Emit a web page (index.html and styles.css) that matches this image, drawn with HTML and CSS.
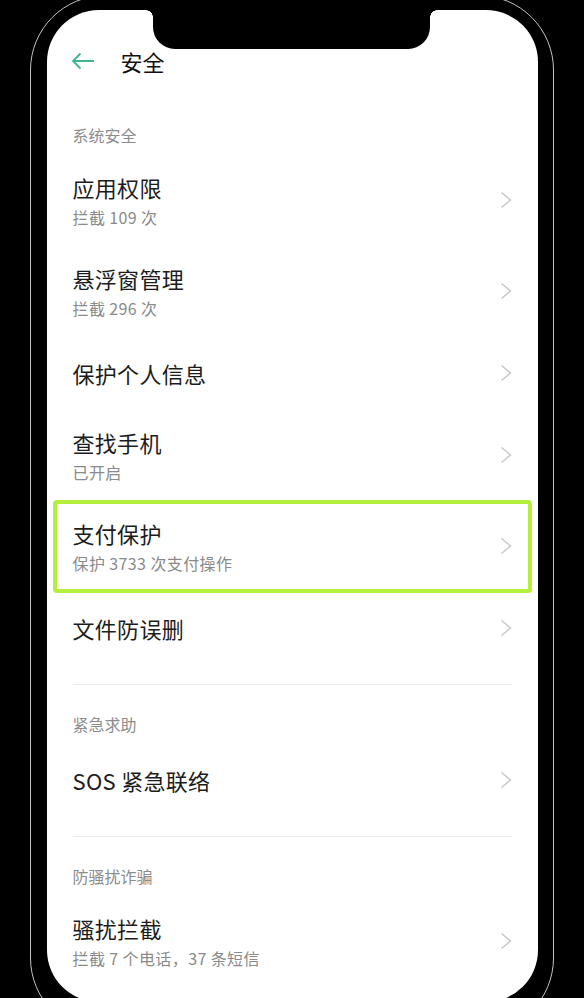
FILE: index.html
```html
<!doctype html>
<html lang="zh-CN">
  <head>
    <meta charset="UTF-8" />
    <meta name="viewport" content="width=device-width, initial-scale=1.0" />
    <title>安全</title>
    <link rel="stylesheet" href="styles.css">
  </head>
  <body>
    <div class="phone">
      <div class="screen">
        <div class="notch"></div>
        <header class="topbar">
          <svg class="back" viewBox="0 0 24 18" width="24" height="18">
            <path d="M23 9H2M9.5 1.5L2 9l7.5 7.5" />
          </svg>
          <h1>安全</h1>
        </header>
        <main class="content">
          <div class="group-label">系统安全</div>
          <div class="row tall">
            <div class="row-text">
              <div class="row-title">应用权限</div>
              <div class="row-sub">拦截 109 次</div>
            </div>
            <svg class="chevron" viewBox="0 0 12 18" width="12" height="18"><path d="M1.5 1.5L10.5 9l-9 7.5" /></svg>
          </div>
          <div class="row tall">
            <div class="row-text">
              <div class="row-title">悬浮窗管理</div>
              <div class="row-sub">拦截 296 次</div>
            </div>
            <svg class="chevron" viewBox="0 0 12 18" width="12" height="18"><path d="M1.5 1.5L10.5 9l-9 7.5" /></svg>
          </div>
          <div class="row">
            <div class="row-text">
              <div class="row-title">保护个人信息</div>
            </div>
            <svg class="chevron" viewBox="0 0 12 18" width="12" height="18"><path d="M1.5 1.5L10.5 9l-9 7.5" /></svg>
          </div>
          <div class="row tall">
            <div class="row-text">
              <div class="row-title">查找手机</div>
              <div class="row-sub">已开启</div>
            </div>
            <svg class="chevron" viewBox="0 0 12 18" width="12" height="18"><path d="M1.5 1.5L10.5 9l-9 7.5" /></svg>
          </div>
          <div class="row tall highlight">
            <div class="row-text">
              <div class="row-title">支付保护</div>
              <div class="row-sub">保护 3733 次支付操作</div>
            </div>
            <svg class="chevron" viewBox="0 0 12 18" width="12" height="18"><path d="M1.5 1.5L10.5 9l-9 7.5" /></svg>
          </div>
          <div class="row">
            <div class="row-text">
              <div class="row-title">文件防误删</div>
            </div>
            <svg class="chevron" viewBox="0 0 12 18" width="12" height="18"><path d="M1.5 1.5L10.5 9l-9 7.5" /></svg>
          </div>

          <div class="divider"></div>
          <div class="group-label">紧急求助</div>
          <div class="row">
            <div class="row-text">
              <div class="row-title">SOS 紧急联络</div>
            </div>
            <svg class="chevron" viewBox="0 0 12 18" width="12" height="18"><path d="M1.5 1.5L10.5 9l-9 7.5" /></svg>
          </div>

          <div class="divider"></div>
          <div class="group-label">防骚扰诈骗</div>
          <div class="row tall">
            <div class="row-text">
              <div class="row-title">骚扰拦截</div>
              <div class="row-sub">拦截 7 个电话，37 条短信</div>
            </div>
            <svg class="chevron" viewBox="0 0 12 18" width="12" height="18"><path d="M1.5 1.5L10.5 9l-9 7.5" /></svg>
          </div>
        </main>
      </div>
    </div>
  </body>
</html>
```

FILE: styles.css
```css
html,
body {
  height: 100%;
  margin: 0;
  padding: 0;
  overflow: hidden;
}
body {
  background: #000;
  font-family: "Noto Sans CJK SC", "Noto Sans", sans-serif;
  color: #1c1c1c;
}
.phone {
  box-sizing: border-box;
  width: 524px;
  margin: -5px auto 0;
  padding: 13.5px 15.5px 30px;
  border: 1.5px solid #c4c4c4;
  border-radius: 75px;
  background: #000;
}
.screen {
  position: relative;
  height: 992px;
  background: #fff;
  border-radius: 52px;
  overflow: hidden;
}
.notch {
  position: absolute;
  top: 0;
  left: 106px;
  width: 277px;
  height: 39px;
  background: #000;
  border-radius: 0 0 22px 22px;
}
.notch::before,
.notch::after {
  content: "";
  position: absolute;
  top: 0;
  width: 7px;
  height: 7px;
}
.notch::before {
  left: -7px;
  background: radial-gradient(circle at 0 100%, transparent 6.5px, #000 7px);
}
.notch::after {
  right: -7px;
  background: radial-gradient(circle at 100% 100%, transparent 6.5px, #000 7px);
}
.topbar {
  display: flex;
  align-items: center;
  gap: 26px;
  height: 56px;
  margin-top: 23px;
  padding-left: 24px;
}
.back {
  fill: none;
  stroke: #3fb58f;
  stroke-width: 1.8;
}
.topbar h1 {
  margin: 0;
  font-size: 22px;
  font-weight: 400;
  color: #111;
}
.content {
  padding: 34px 26px 0;
}
.group-label {
  font-size: 16px;
  line-height: 24px;
  color: #8c8c8c;
  margin-bottom: 8px;
}
.row {
  box-sizing: border-box;
  display: flex;
  align-items: center;
  justify-content: space-between;
  height: 73px;
}
.row.tall {
  height: 91px;
}
.row-title {
  font-size: 22px;
  line-height: 32px;
  letter-spacing: 0.3px;
  color: #1c1c1c;
}
.row-sub {
  margin-top: 2px;
  font-size: 16px;
  line-height: 24px;
  letter-spacing: 0.4px;
  color: #8a8a8a;
}
.chevron {
  flex: none;
  fill: none;
  stroke: #cacaca;
  stroke-width: 1.6;
}
.row.highlight {
  height: 93px;
  margin: -1px -20px;
  padding: 0 16px;
  border: 4px solid #b3ef3c;
  border-radius: 4px;
}
.divider {
  height: 1px;
  background: #ededed;
  margin: 19px 0 27px;
}
```
